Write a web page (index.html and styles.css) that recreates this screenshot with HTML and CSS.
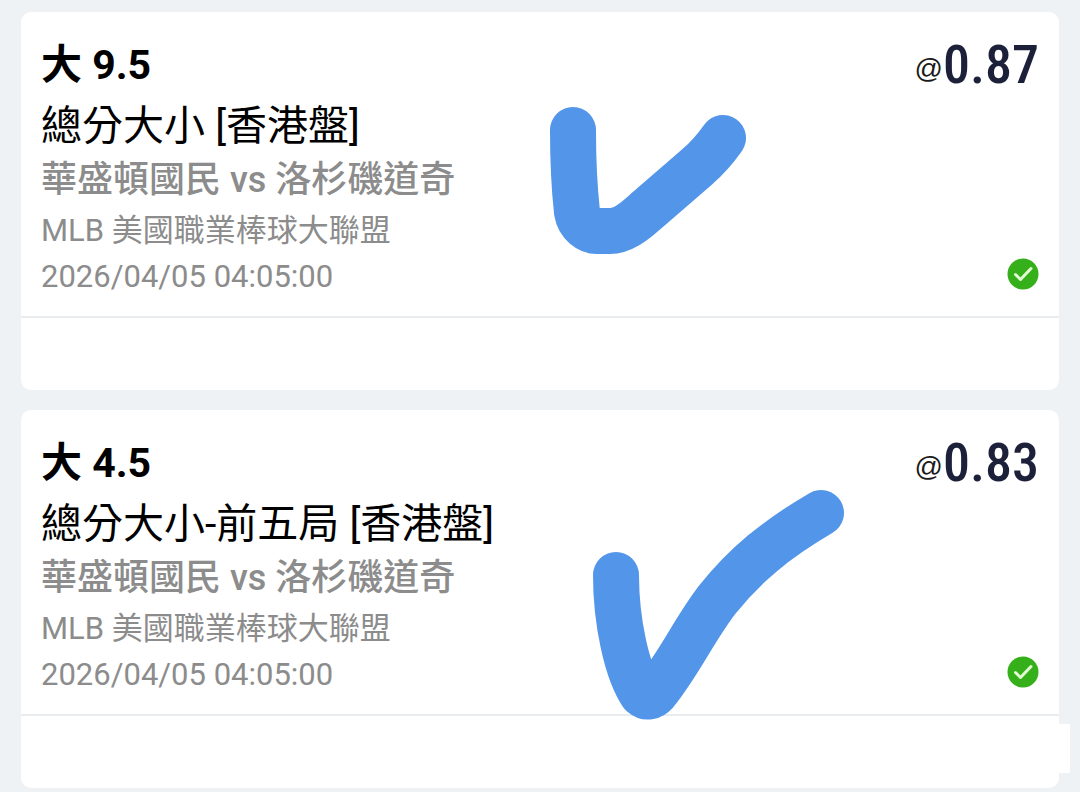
FILE: index.html
```
<!DOCTYPE html>
<html lang="zh-Hant">
  <head>
    <meta charset="UTF-8" />
    <meta name="viewport" content="width=device-width, initial-scale=1.0" />
    <title>MLB 美國職業棒球大聯盟</title>
    <link rel="stylesheet" href="styles.css">
  </head>
  <body>
    <main class="bets">
      <article class="card">
        <div class="content">
          <div class="info">
            <h2 class="pick">大 9.5</h2>
            <p class="market">總分大小 [香港盤]</p>
            <p class="teams">華盛頓國民 vs 洛杉磯道奇</p>
            <p class="league">MLB 美國職業棒球大聯盟</p>
            <p class="date">2026/04/05 04:05:00</p>
          </div>
          <div class="side">
            <p class="odds"><span class="at">@</span>0.87</p>
            <svg class="status" viewBox="0 0 32 32">
              <circle cx="16" cy="16" r="15.5" fill="#36b01a" />
              <path d="M8.5 16.5l5 5L24 10.500" fill="none" stroke="#e2fbd4" stroke-width="3" stroke-linecap="round" stroke-linejoin="round" />
            </svg>
          </div>
        </div>
        <div class="footer"></div>
        <svg class="mark mark-short" viewBox="0 0 200 150">
          <path d="M24 25C24 60 25 80 28 107C30 119 40 126 48 126H61C73 126 85 117 96 107L148 62Q162 50 174 33" />
        </svg>
      </article>

      <article class="card">
        <div class="content">
          <div class="info">
            <h2 class="pick">大 4.5</h2>
            <p class="market">總分大小-前五局 [香港盤]</p>
            <p class="teams">華盛頓國民 vs 洛杉磯道奇</p>
            <p class="league">MLB 美國職業棒球大聯盟</p>
            <p class="date">2026/04/05 04:05:00</p>
          </div>
          <div class="side">
            <p class="odds"><span class="at">@</span>0.83</p>
            <svg class="status" viewBox="0 0 32 32">
              <circle cx="16" cy="16" r="15.5" fill="#36b01a" />
              <path d="M8.5 16.5l5 5L24 10.500" fill="none" stroke="#e2fbd4" stroke-width="3" stroke-linecap="round" stroke-linejoin="round" />
            </svg>
          </div>
        </div>
        <div class="footer footer-wide"></div>
        <svg class="mark mark-long" viewBox="0 0 256 234">
          <path d="M25 88C25 135 36 185 51 207Q58 213 65 205C89 175 103 143 126 113C154 78 184 53 230 26" />
        </svg>
      </article>
    </main>
  </body>
</html>
```
FILE: styles.css
```
body {
  margin: 0;
  background-color: #eef2f5;
  font-family: Roboto, "Noto Sans CJK TC", sans-serif;
}
h2,
p {
  margin: 0;
}
.bets {
  display: flex;
  flex-direction: column;
  gap: 20px;
  padding: 12px 21px 4px;
}
.card {
  position: relative;
  background-color: white;
  border-radius: 10px;
}
.content {
  display: flex;
  justify-content: space-between;
  padding: 22px 20px 20px;
  border-bottom: 2px solid #e8ecef;
}
.pick {
  font-size: 41px;
  line-height: 62px;
  font-weight: 700;
}
.market {
  font-size: 41px;
  line-height: 60px;
}
.teams {
  font-size: 36px;
  line-height: 48px;
  font-weight: 500;
  color: #8c8c8c;
}
.league {
  font-size: 31px;
  line-height: 54px;
  color: #8c8c8c;
}
.date {
  font-size: 31px;
  line-height: 38px;
  color: #8c8c8c;
}
.side {
  display: flex;
  flex-direction: column;
  justify-content: space-between;
  align-items: flex-end;
  padding-bottom: 6px;
}
.odds {
  display: flex;
  align-items: center;
  font-family: "Roboto Condensed", "Liberation Sans Narrow", Roboto, sans-serif;
  font-size: 54px;
  line-height: 62px;
  font-weight: 500;
  color: #1c2039;
}
.at {
  padding-top: 8px;
  font-family: "Liberation Sans", sans-serif;
  font-size: 28px;
  line-height: 32px;
  font-weight: 400;
  color: #1a1a1a;
}
.status {
  width: 32px;
  height: 32px;
}
.footer {
  height: 72px;
}
.footer-wide::after {
  content: "";
  position: absolute;
  right: -11px;
  bottom: 15px;
  width: 12px;
  height: 49px;
  background-color: white;
}

/* hand drawn ticks over the cards */
.mark {
  position: absolute;
  fill: none;
  stroke: #5295e9;
  stroke-width: 46px;
  stroke-linecap: round;
  stroke-linejoin: round;
}
.mark-short {
  top: 93px;
  left: 528px;
  width: 200px;
  height: 150px;
}
.mark-long {
  top: 77px;
  left: 570px;
  width: 256px;
  height: 234px;
}
```
